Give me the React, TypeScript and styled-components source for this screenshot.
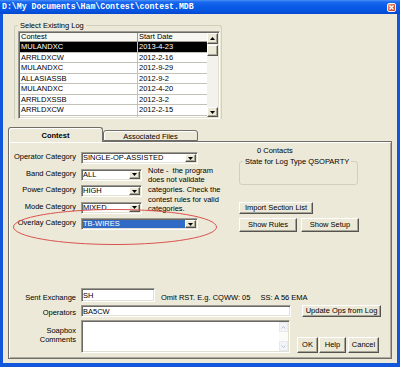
import React from "react";
import styled, { createGlobalStyle, css } from "styled-components";

const GlobalStyle = createGlobalStyle`
  * { box-sizing: border-box; }
  html, body { margin: 0; padding: 0; background: #ECE9D8; }
  body {
    font-family: "Liberation Sans", Arial, sans-serif;
    font-size: 7.5px;
    color: #000;
    overflow: hidden;
  }
`;

const sunken = css`
  border: 1px solid;
  border-color: #9d9b91 #ffffff #ffffff #9d9b91;
  box-shadow: inset 1px 1px 0 #6a6862, inset -1px -1px 0 #e2dfd3;
  background: #fff;
`;

const raised = css`
  border: 1px solid;
  border-color: #ffffff #55534e #55534e #ffffff;
  box-shadow: inset -1px -1px 0 #a7a498;
  background: #ece9d8;
`;

const Window = styled.div`
  width: 400px;
  height: 367px;
  display: flex;
  flex-direction: column;
  background: #1256dc;
`;

const TitleBar = styled.div`
  height: 14px;
  flex: none;
  display: flex;
  align-items: center;
  justify-content: space-between;
  padding: 0 4px 0 2px;
  background: linear-gradient(#4a92f8 0, #1a68ee 2px, #0b5ce8 6px, #0654e0 11px, #0447cf 14px);
`;

const Title = styled.span`
  font-family: "Liberation Mono", "DejaVu Sans Mono", monospace;
  font-weight: bold;
  font-size: 8.2px;
  line-height: 14px;
  color: #fff;
  white-space: pre;
`;

const CloseButton = styled.div`
  width: 9px;
  height: 9px;
  border: 1px solid #f4f4f4;
  border-radius: 2px;
  background: linear-gradient(135deg, #f0a58a, #dc5a35 55%, #c8401c);
  display: flex;
  align-items: center;
  justify-content: center;
`;

const Body = styled.div`
  flex: 1;
  min-height: 0;
  margin: 0 3px 4px;
  background: #ece9d8;
  display: flex;
  flex-direction: column;
`;

const LogGroup = styled.div`
  margin: 11px 0 0 11px;
  width: 208px;
  border: 1px solid #d0d0bf;
  border-bottom: none;
  border-radius: 3px 3px 0 0;
  padding: 0 1px 0 3px;
`;

const Caption = styled.div<{ $ml?: number }>`
  width: fit-content;
  margin: -5px 0 0 ${(p) => p.$ml ?? 0}px;
  padding: 0 2px;
  line-height: 9px;
  background: #ece9d8;
  white-space: nowrap;
`;

const ListBox = styled.div`
  ${sunken};
  padding: 1px;
  margin-top: 1px;
  width: 202px;
  height: 88px;
  display: flex;
  overflow: hidden;
`;

const ListArea = styled.div`
  flex: 1;
  overflow: hidden;
`;

const HeaderRow = styled.div`
  display: grid;
  grid-template-columns: 117px 1fr;
  height: 9px;
  line-height: 8px;
  background: #f7f6f1;
  border-bottom: 1px solid #9a9890;
`;

const DataRow = styled.div<{ $sel?: boolean }>`
  display: grid;
  grid-template-columns: 117px 1fr;
  height: 10.5px;
  line-height: 9.5px;
  border-bottom: 1px solid #c4c2b8;
  background: ${(p) => (p.$sel ? "#000" : "#fff")};
  color: ${(p) => (p.$sel ? "#fff" : "#000")};
`;

const Cell = styled.div<{ $div?: boolean; $head?: boolean }>`
  padding-left: 1px;
  white-space: nowrap;
  overflow: hidden;
  border-left: ${(p) => (p.$div ? `1px solid ${p.$head ? "#9a9890" : "#c4c2b8"}` : "none")};
`;

const ScrollBar = styled.div`
  width: 11px;
  flex: none;
  display: flex;
  flex-direction: column;
  background: #f3f2ec;
`;

const ScrollBtn = styled.div<{ $h: number }>`
  ${raised};
  height: ${(p) => p.$h}px;
  flex: none;
  display: flex;
  align-items: center;
  justify-content: center;
`;

const Thumb = styled.div`
  ${raised};
  height: 11.5px;
  flex: none;
  margin-top: 1px;
`;

const Track = styled.div`
  flex: 1;
`;

const TabStrip = styled.div`
  display: flex;
  align-items: flex-end;
  height: 14px;
  margin: 8px 0 0 5px;
  position: relative;
  z-index: 1;
`;

const Tab = styled.div<{ $active?: boolean }>`
  width: 95px;
  height: ${(p) => (p.$active ? 15 : 11)}px;
  margin-bottom: ${(p) => (p.$active ? -1 : 0)}px;
  border: 1px solid #6f6e68;
  border-bottom: ${(p) => (p.$active ? "none" : "1px solid #6f6e68")};
  border-radius: 3px 3px 0 0;
  box-shadow: inset 1px 1px 0 #fff;
  background: #ece9d8;
  display: flex;
  align-items: center;
  justify-content: center;
  font-weight: ${(p) => (p.$active ? "bold" : "normal")};
  padding-top: ${(p) => (p.$active ? 0 : 1)}px;
`;

const Panel = styled.div`
  flex: 1;
  min-height: 0;
  margin: 0 5px 4px;
  border: 1px solid #6f6e68;
  box-shadow: inset 1px 1px 0 #fff, inset -1px -1px 0 #adaaa0;
  padding: 4px 0 5px 0;
  display: flex;
  flex-direction: column;
  position: relative;
`;

const TopRegion = styled.div`
  display: flex;
  align-items: flex-start;
`;

const FormGrid = styled.div`
  display: grid;
  grid-template-columns: 67px 61px 85px;
  grid-template-rows: repeat(5, 12px);
  column-gap: 5px;
  row-gap: 4.5px;
  margin-top: 6px;
`;

const FieldLabel = styled.div<{ $end?: boolean; $row?: number }>`
  grid-column: 1;
  ${(p) => (p.$row ? `grid-row: ${p.$row};` : "")}
  justify-self: end;
  align-self: ${(p) => (p.$end ? "end" : "start")};
  line-height: 9px;
  white-space: nowrap;
`;

const Select = styled.div<{ $wide?: boolean; $row: number }>`
  ${sunken};
  padding: 1px;
  height: 12px;
  display: flex;
  grid-row: ${(p) => p.$row};
  grid-column: ${(p) => (p.$wide ? "2 / span 2" : "2")};
  width: ${(p) => (p.$wide ? 117 : 61)}px;
  justify-self: start;
`;

const SelectValue = styled.div<{ $hl?: boolean }>`
  flex: 1;
  line-height: 8px;
  white-space: nowrap;
  overflow: hidden;
  background: ${(p) => (p.$hl ? "#316ac5" : "transparent")};
  color: ${(p) => (p.$hl ? "#fff" : "#000")};
`;

const DropButton = styled.div`
  ${raised};
  width: 11px;
  flex: none;
  display: flex;
  align-items: center;
  justify-content: center;
`;

const Note = styled.div`
  grid-column: 3;
  grid-row: 2 / span 3;
  margin: -3px 0 0 1px;
  line-height: 9.7px;
  white-space: nowrap;
`;

const RightCol = styled.div`
  width: 119px;
  margin-left: 7px;
  display: flex;
  flex-direction: column;
  align-items: flex-start;
`;

const Contacts = styled.div`
  padding-left: 18px;
  line-height: 9px;
`;

const StateGroup = styled.div`
  margin-top: 6px;
  width: 119px;
  height: 24px;
  border: 1px solid #d0d0bf;
  border-radius: 3px;
`;

const Button = styled.div<{ $w: number; $h: number; $mt?: number; $ml?: number }>`
  ${raised};
  width: ${(p) => p.$w}px;
  height: ${(p) => p.$h}px;
  margin-top: ${(p) => p.$mt ?? 0}px;
  margin-left: ${(p) => p.$ml ?? 0}px;
  flex: none;
  display: flex;
  align-items: center;
  justify-content: center;
  white-space: nowrap;
  line-height: 1;
`;

const ButtonRow = styled.div`
  display: flex;
  gap: 4px;
  margin-top: 4.5px;
`;

const Annotation = styled.svg`
  position: absolute;
  left: 3px;
  top: 66px;
  pointer-events: none;
`;

const BottomGrid = styled.div`
  margin-top: auto;
  display: grid;
  grid-template-columns: 67px auto;
  column-gap: 5px;
  row-gap: 3px;
`;

const ControlRow = styled.div`
  display: flex;
  align-items: flex-end;
`;

const TextInput = styled.div<{ $w: number; $h: number }>`
  ${sunken};
  padding: 1px;
  width: ${(p) => p.$w}px;
  height: ${(p) => p.$h}px;
  display: flex;
  align-items: center;
  flex: none;
  white-space: nowrap;
`;

const Hint = styled.div`
  margin-left: 6px;
  line-height: 9px;
  display: flex;
  gap: 10px;
  white-space: nowrap;
`;

const SoapLabel = styled.div`
  grid-column: 1;
  justify-self: end;
  align-self: start;
  text-align: right;
  margin-top: 5.5px;
  line-height: 9.5px;
`;

const CommentBox = styled.div`
  ${sunken};
  padding: 1px;
  width: 209px;
  height: 33px;
  flex: none;
  display: flex;
  justify-content: flex-end;
`;

const DisabledScroll = styled.div`
  width: 9px;
  display: flex;
  flex-direction: column;
  justify-content: space-between;
  background: #fbfbf8;
`;

const DisabledBtn = styled.div`
  height: 10px;
  border: 1px solid #e6e9f0;
  background: #f2f4f8;
  display: flex;
  align-items: center;
  justify-content: center;
`;

const Tri = ({ up }: { up?: boolean }) => (
  <svg width="5" height="3" viewBox="0 0 5 3">
    <path d={up ? "M0 3h5L2.5 0z" : "M0 0h5L2.5 3z"} fill="#000" />
  </svg>
);

const Chevron = ({ up }: { up?: boolean }) => (
  <svg width="5" height="3" viewBox="0 0 5 3">
    <path d={up ? "M0.5 2.5L2.5 0.5L4.5 2.5" : "M0.5 0.5L2.5 2.5L4.5 0.5"} fill="none" stroke="#b8c2d6" strokeWidth="1" />
  </svg>
);

const logs: [string, string][] = [
  ["MULANDXC", "2013-4-23"],
  ["ARRLDXCW", "2012-2-16"],
  ["MULANDXC", "2012-9-29"],
  ["ALLASIASSB", "2012-9-2"],
  ["MULANDXC", "2012-4-20"],
  ["ARRLDXSSB", "2012-3-2"],
  ["ARRLDXCW", "2012-2-15"],
  ["ARRLDXSSB", "2011-3-5"],
];

const categories: { label: string; value: string; wide?: boolean; hl?: boolean }[] = [
  { label: "Operator Category", value: "SINGLE-OP-ASSISTED", wide: true },
  { label: "Band Category", value: "ALL" },
  { label: "Power Category", value: "HIGH" },
  { label: "Mode Category", value: "MIXED" },
  { label: "Overlay Category", value: "TB-WIRES", wide: true, hl: true },
];

export default function App() {
  return (
    <>
      <GlobalStyle />
      <Window>
        <TitleBar>
          <Title>D:\My Documents\Ham\Contest\contest.MDB</Title>
          <CloseButton>
            <svg width="5" height="5" viewBox="0 0 5 5">
              <path d="M0.5 0.5L4.5 4.5M4.5 0.5L0.5 4.5" stroke="#fff" strokeWidth="1.2" />
            </svg>
          </CloseButton>
        </TitleBar>
        <Body>
          <LogGroup>
            <Caption>Select Existing Log</Caption>
            <ListBox>
              <ListArea>
                <HeaderRow>
                  <Cell $head>Contest</Cell>
                  <Cell $head $div>Start Date</Cell>
                </HeaderRow>
                {logs.map(([c, d], i) => (
                  <DataRow key={i} $sel={i === 0}>
                    <Cell>{c}</Cell>
                    <Cell $div>{d}</Cell>
                  </DataRow>
                ))}
              </ListArea>
              <ScrollBar>
                <ScrollBtn $h={10.5}>
                  <Tri up />
                </ScrollBtn>
                <Thumb />
                <Track />
                <ScrollBtn $h={10}>
                  <Tri />
                </ScrollBtn>
              </ScrollBar>
            </ListBox>
          </LogGroup>

          <TabStrip>
            <Tab $active>Contest</Tab>
            <Tab>Associated Files</Tab>
          </TabStrip>
          <Panel>
            <TopRegion>
              <FormGrid>
                {categories.map((c, i) => (
                  <React.Fragment key={c.label}>
                    <FieldLabel $row={i + 1}>{c.label}</FieldLabel>
                    <Select $wide={c.wide} $row={i + 1}>
                      <SelectValue $hl={c.hl}>{c.value}</SelectValue>
                      <DropButton>
                        <Tri />
                      </DropButton>
                    </Select>
                  </React.Fragment>
                ))}
                <Note>
                  Note -&nbsp; the program
                  <br />
                  does not validate
                  <br />
                  categories. Check the
                  <br />
                  contest rules for valid
                  <br />
                  categories.
                </Note>
              </FormGrid>
              <RightCol>
                <Contacts>0 Contacts</Contacts>
                <StateGroup>
                  <Caption $ml={3}>State for Log Type QSOPARTY</Caption>
                </StateGroup>
                <Button $w={74} $h={12} $mt={16.5}>
                  Import Section List
                </Button>
                <ButtonRow>
                  <Button $w={58} $h={14}>
                    Show Rules
                  </Button>
                  <Button $w={58} $h={14}>
                    Show Setup
                  </Button>
                </ButtonRow>
              </RightCol>
            </TopRegion>

            <BottomGrid>
              <FieldLabel $end>Sent Exchange</FieldLabel>
              <ControlRow>
                <TextInput $w={74} $h={14}>SH</TextInput>
                <Hint>
                  <span>Omit RST. E.g. CQWW: 05</span>
                  <span>SS: A 56 EMA</span>
                </Hint>
              </ControlRow>
              <FieldLabel $end>Operators</FieldLabel>
              <ControlRow>
                <TextInput $w={210} $h={12}>BA5CW</TextInput>
                <Button $w={79} $h={12} $ml={11}>
                  Update Ops from Log
                </Button>
              </ControlRow>
              <SoapLabel>
                Soapbox
                <br />
                Comments
              </SoapLabel>
              <ControlRow>
                <CommentBox>
                  <DisabledScroll>
                    <DisabledBtn>
                      <Chevron up />
                    </DisabledBtn>
                    <DisabledBtn>
                      <Chevron />
                    </DisabledBtn>
                  </DisabledScroll>
                </CommentBox>
                <Button $w={21} $h={16} $ml={7}>
                  OK
                </Button>
                <Button $w={27} $h={16} $ml={1}>
                  Help
                </Button>
                <Button $w={31} $h={16} $ml={2}>
                  Cancel
                </Button>
              </ControlRow>
            </BottomGrid>

            <Annotation width="208" height="38" viewBox="0 0 208 38">
              <ellipse cx="103" cy="19" rx="101.5" ry="17.5" fill="none" stroke="#d9534f" strokeWidth="1" />
            </Annotation>
          </Panel>
        </Body>
      </Window>
    </>
  );
}
